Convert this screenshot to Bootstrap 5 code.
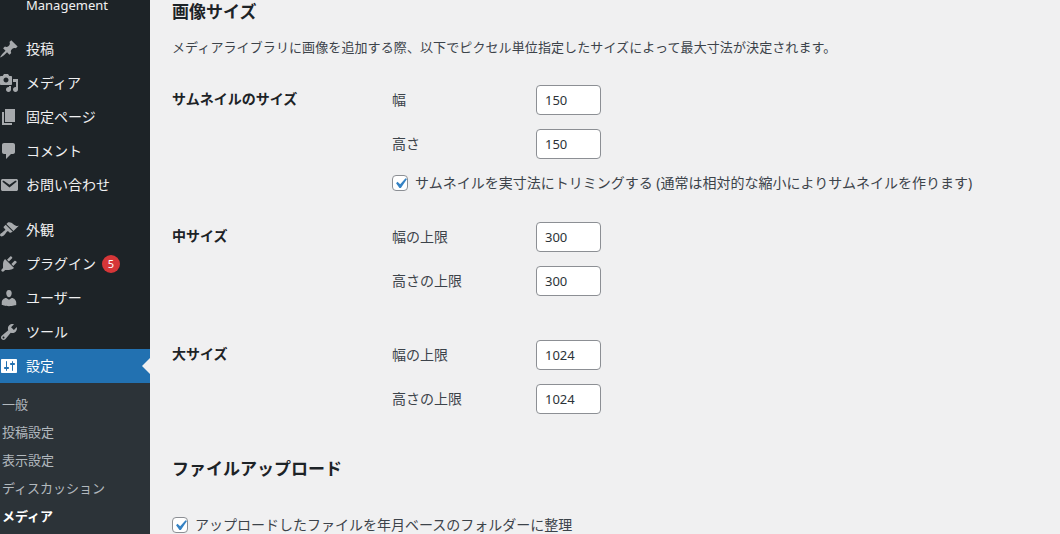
<!DOCTYPE html>
<html lang="ja"><head><meta charset="utf-8">
<title>メディア設定</title>
<link href="https://cdn.jsdelivr.net/npm/bootstrap@5.3.0/dist/css/bootstrap.min.css" rel="stylesheet">
<style>
html,body{height:534px;overflow:hidden}
body{background:#f0f0f1;color:#3c434a;font-family:"Noto Sans","Noto Sans CJK JP",sans-serif;font-size:13px}
.shell{height:534px;overflow:hidden}
.side{width:150px;flex:none;background:#1d2327;color:#f0f0f1;font-size:14px;overflow:hidden}
.brand{height:21px;padding-left:26px;line-height:10px;font-size:13px}
.mi{height:34px;padding-bottom:2px;display:flex;align-items:center;position:relative;color:#f0f0f1;white-space:nowrap}
.mi svg{width:20px;height:20px;margin:2px 7px 0 -1px;fill:#a7aaad;flex:none}
.g1{margin-top:11px}.g2{margin-top:11px}
.mi.on{background:#2271b1;color:#fff}
.mi.on svg{fill:#fff}
.mi.on::after{content:"";position:absolute;right:0;top:9px;border:8px solid transparent;border-right-color:#f0f0f1;border-left-width:0}
.pill{width:18px;height:18px;border-radius:50%;background:#d63638;color:#fff;font-size:11px;line-height:18px;text-align:center;margin:2px 0 0 6px}
.subm{background:#2c3338;padding-top:7px;height:200px}
.si{height:28px;line-height:28px;padding-left:2px;font-size:13px;color:rgba(240,246,252,.7);white-space:nowrap}
.si.cur{color:#fff;font-weight:700}
.main{padding-left:22px;flex:1}
.hd{font-size:17px;font-weight:700;color:#1d2327;line-height:24px;margin:0}
.intro{margin:13px 0 0;line-height:20px;white-space:nowrap;letter-spacing:.1px}
.grp{display:flex}
.grp-t{width:220px;flex:none;font-weight:700;color:#1d2327;font-size:14px;line-height:20px;padding-top:4px}
.fld{display:flex;align-items:center;height:30px;margin-bottom:14px}
.fld label{width:144px;flex:none;font-size:14px;padding-bottom:2px}
.numin{width:65px;height:30px;padding:0 8px;font-size:13px;color:#2c3338;border:1px solid #8c8f94;border-radius:4px;background:#fff;box-shadow:none}
.chk{display:flex;align-items:center;line-height:20px;white-space:nowrap;font-size:14px}
.box{width:16px;height:16px;flex:none;margin-right:7px;border:1px solid #8c8f94;border-radius:4px;background:#fff;display:flex;align-items:center;justify-content:center}
.box svg{width:21px;height:21px;fill:#3582c4;flex:none}
.gap-a{margin-top:28px}.gap-b{margin-top:29px}.gap-c{margin-top:30px}.gap-d{margin-top:29px}.gap-e{margin-top:34px}.gap-f{margin-top:1px}
</style></head>
<body>
<div class="d-flex shell">
<nav class="side">
<div class="brand">Management</div>
<div class="mi g1"><svg viewBox="0 0 20 20"><path d="M10.44 3.02l1.82-1.82 6.36 6.35-1.83 1.82c-1.05-.68-2.48-.57-3.41.36l-.75.75c-.92.93-1.04 2.35-.35 3.41l-1.83 1.82-2.41-2.41-2.8 2.79c-.42.42-3.38 2.71-3.8 2.29s1.86-3.39 2.28-3.81l2.79-2.79L4.1 9.36l1.83-1.82c1.05.69 2.48.57 3.4-.36l.75-.75c.93-.92 1.05-2.35.36-3.41z"/></svg>投稿</div>
<div class="mi"><svg viewBox="0 0 20 20"><path d="M13 11V4c0-.55-.45-1-1-1h-1.67L9 1H5L3.67 3H2c-.55 0-1 .45-1 1v7c0 .55.45 1 1 1h10c.55 0 1-.45 1-1zM7 4.5c1.38 0 2.5 1.12 2.5 2.5S8.38 9.5 7 9.5 4.5 8.38 4.5 7 5.62 4.5 7 4.5zM14 6h5v10.5c0 1.38-1.12 2.5-2.5 2.5S14 17.88 14 16.5s1.12-2.5 2.5-2.5c.17 0 .34.02.5.05V9h-3V6zm-4 8.05V13h2v3.5c0 1.38-1.12 2.5-2.5 2.5S7 17.88 7 16.5 8.12 14 9.5 14c.17 0 .34.02.5.05z"/></svg>メディア</div>
<div class="mi"><svg viewBox="0 0 20 20"><path d="M6 15V2h10v13H6zm-1 1h8v2H3V5h2v11z"/></svg>固定ページ</div>
<div class="mi"><svg viewBox="0 0 20 20"><path d="M5 2h9c1.1 0 2 .9 2 2v7c0 1.1-.9 2-2 2h-2l-5 5v-5H5c-1.1 0-2-.9-2-2V4c0-1.1.9-2 2-2z"/></svg>コメント</div>
<div class="mi"><svg viewBox="0 0 20 20"><path d="M3.87 4h13.25C18.37 4 19 4.59 19 5.79v8.42c0 1.19-.63 1.79-1.88 1.79H3.87c-1.25 0-1.88-.6-1.88-1.79V5.79c0-1.2.63-1.79 1.88-1.79zm6.62 8.6l6.74-5.53c.24-.2.43-.66.13-1.07-.29-.41-.82-.42-1.17-.17l-5.7 3.86L4.8 5.83c-.35-.25-.88-.24-1.17.17-.3.41-.11.87.13 1.07z"/></svg>お問い合わせ</div>
<div class="mi g2"><svg viewBox="0 0 20 20"><path d="M14.48 11.06L7.41 3.99l1.5-1.5c.5-.56 2.3-.47 3.51.32 1.21.8 1.43 1.28 2.91 2.1 1.18.64 2.45 1.26 4.45.85zm-.71.71L6.7 4.7 4.93 6.47c-.39.39-.39 1.02 0 1.41l1.06 1.06c.39.39.39 1.03 0 1.42-.6.6-1.43 1.11-2.21 1.69-.35.26-.7.53-1.01.84C1.43 13.23.4 14.95 1.44 15.99c1.04 1.04 2.76.01 4.08-1.33.31-.31.58-.66.84-1.01.58-.78 1.09-1.61 1.69-2.21.39-.39 1.03-.39 1.42 0l1.06 1.06c.39.39 1.02.39 1.41 0z"/></svg>外観</div>
<div class="mi"><svg viewBox="0 0 20 20"><path d="M13.11 4.36L9.87 7.6 8 5.73l3.24-3.24c.35-.34 1.05-.2 1.56.32.52.51.66 1.21.31 1.55zm-8 1.77l.91-1.12 9.01 9.01-1.19.84c-.71.71-2.63 1.16-3.82 1.16H6.14L4.9 17.26c-.59.59-1.54.59-2.12 0-.59-.58-.59-1.53 0-2.12l1.24-1.24v-3.88c0-1.13.4-3.19 1.09-3.89zm7.26 3.97l3.24-3.24c.34-.35 1.04-.21 1.55.31.52.51.66 1.21.31 1.55l-3.24 3.25z"/></svg>プラグイン<span class="pill">5</span></div>
<div class="mi"><svg viewBox="0 0 20 20"><path d="M10 9.25c-2.27 0-2.73-3.44-2.73-3.44C7 4.02 7.82 2 9.97 2c2.16 0 2.98 2.02 2.71 3.81 0 0-.41 3.44-2.68 3.44zm0 2.57L12.72 10c2.39 0 4.52 2.33 4.52 4.53v2.49s-3.65 1.13-7.24 1.13c-3.65 0-7.24-1.13-7.24-1.13v-2.49c0-2.25 1.94-4.48 4.47-4.48z"/></svg>ユーザー</div>
<div class="mi"><svg viewBox="0 0 20 20"><path d="M16.68 9.77c-1.34 1.34-3.3 1.67-4.95.99l-5.41 6.52c-.99.99-2.59.99-3.58 0s-.99-2.59 0-3.57l6.52-5.42c-.68-1.65-.35-3.61.99-4.95 1.28-1.28 3.12-1.62 4.72-1.06l-2.89 2.89 2.82 2.82 2.86-2.87c.53 1.58.18 3.39-1.08 4.65zM3.81 16.21c.4.39 1.04.39 1.43 0 .4-.4.4-1.04 0-1.43-.39-.4-1.03-.4-1.43 0-.39.39-.39 1.03 0 1.43z"/></svg>ツール</div>
<div class="mi on"><svg viewBox="0 0 20 20"><path d="M18 16V4c0-.55-.45-1-1-1H3c-.55 0-1 .45-1 1v12c0 .55.45 1 1 1h14c.55 0 1-.45 1-1zM8 11h1c.55 0 1 .45 1 1s-.45 1-1 1H8v1.5c0 .28-.22.5-.5.5s-.5-.22-.5-.5V13H6c-.55 0-1-.45-1-1s.45-1 1-1h1V5.5c0-.28.22-.5.5-.5s.5.22.5.5V11zm5-2h-1c-.55 0-1-.45-1-1s.45-1 1-1h1V5.5c0-.28.22-.5.5-.5s.5.22.5.5V7h1c.55 0 1 .45 1 1s-.45 1-1 1h-1v5.5c0 .28-.22.5-.5.5s-.5-.22-.5-.5V9z"/></svg>設定</div>
<div class="subm">
<div class="si">一般</div><div class="si">投稿設定</div><div class="si">表示設定</div><div class="si">ディスカッション</div><div class="si cur">メディア</div>
</div>
</nav>
<main class="main">
<h2 class="hd">画像サイズ</h2>
<p class="intro">メディアライブラリに画像を追加する際、以下でピクセル単位指定したサイズによって最大寸法が決定されます。</p>
<div class="grp gap-a">
<div class="grp-t">サムネイルのサイズ</div>
<div>
<div class="fld"><label>幅</label><input class="form-control numin" value="150"></div>
<div class="fld"><label>高さ</label><input class="form-control numin" value="150"></div>
<div class="chk gap-f"><span class="box"><svg viewBox="0 0 20 20"><path d="M14.83 4.89l1.34.94-5.81 8.38H9.02L5.78 9.67l1.34-1.25 2.57 2.4z"/></svg></span>サムネイルを実寸法にトリミングする (通常は相対的な縮小によりサムネイルを作ります)</div>
</div>
</div>
<div class="grp gap-b">
<div class="grp-t">中サイズ</div>
<div>
<div class="fld"><label>幅の上限</label><input class="form-control numin" value="300"></div>
<div class="fld"><label>高さの上限</label><input class="form-control numin" value="300"></div>
</div>
</div>
<div class="grp gap-c">
<div class="grp-t">大サイズ</div>
<div>
<div class="fld"><label>幅の上限</label><input class="form-control numin" value="1024"></div>
<div class="fld"><label>高さの上限</label><input class="form-control numin" value="1024"></div>
</div>
</div>
<h2 class="hd gap-d">ファイルアップロード</h2>
<div class="chk gap-e"><span class="box"><svg viewBox="0 0 20 20"><path d="M14.83 4.89l1.34.94-5.81 8.38H9.02L5.78 9.67l1.34-1.25 2.57 2.4z"/></svg></span>アップロードしたファイルを年月ベースのフォルダーに整理</div>
</main>
</div>
</body></html>
